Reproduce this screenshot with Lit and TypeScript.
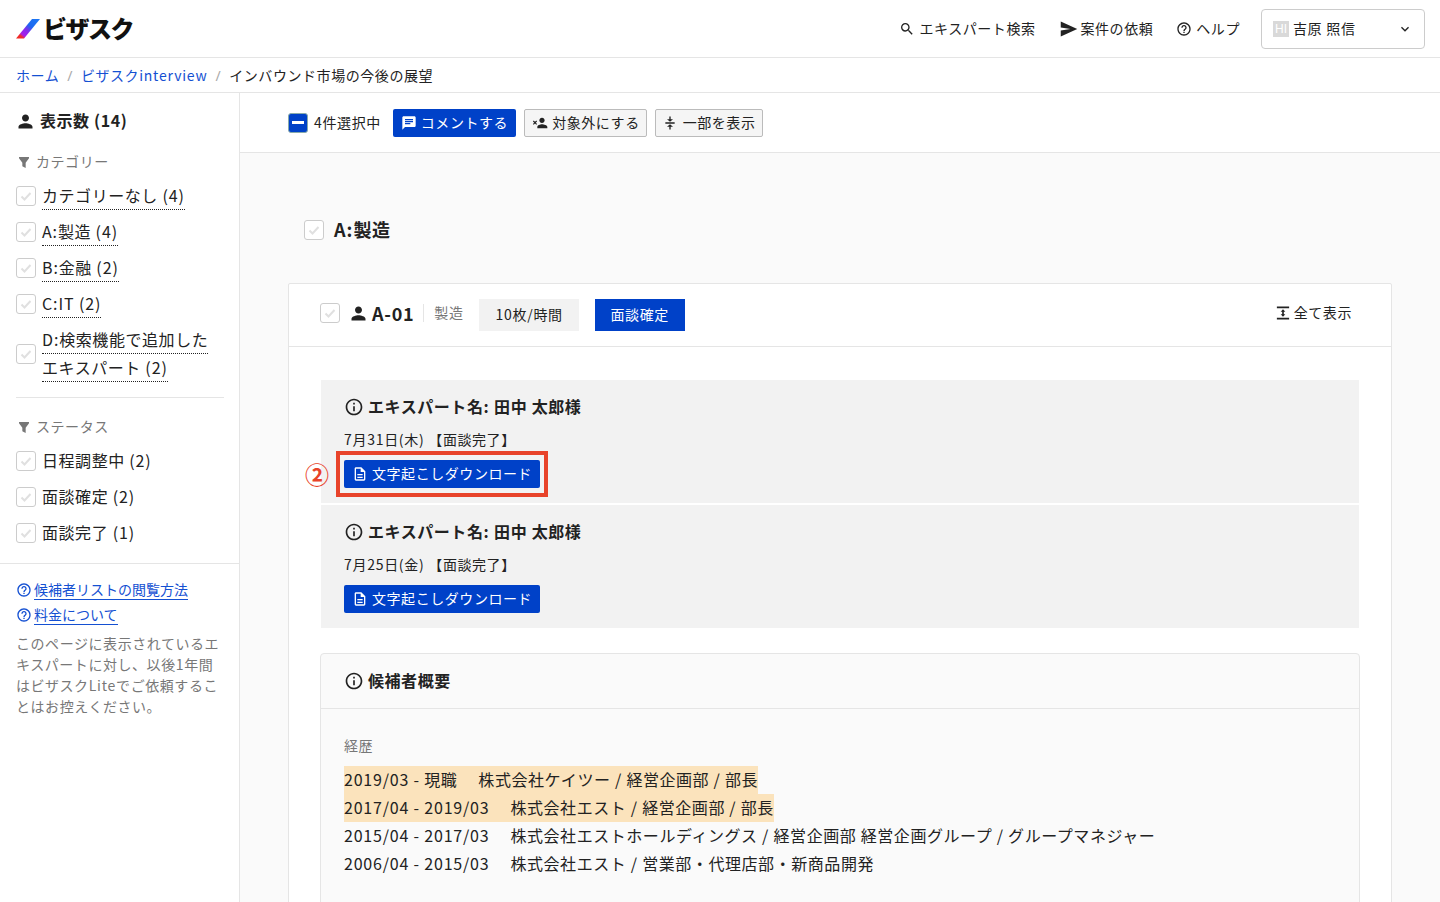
import { LitElement, html, css, svg } from "lit";
import { customElement } from "lit/decorators.js";

const ic = (d: string, size = 16, cls = "") =>
  html`<svg class="ic ${cls}" width=${size} height=${size} viewBox="0 0 24 24" fill="currentColor">${svg`<path d=${d}></path>`}</svg>`;

const t = (s: string) =>
  s.split(/([\x20-\x7e]+)/).map((part, i) => (i % 2 ? html`<span class="lat">${part}</span>` : part ? html`<span>${part}</span>` : ""));

const P = {
  person: "M12 12c2.21 0 4-1.79 4-4s-1.79-4-4-4-4 1.79-4 4 1.79 4 4 4zm0 2c-2.67 0-8 1.34-8 4v2h16v-2c0-2.66-5.33-4-8-4z",
  filter: "M4.5 4.5h15v2L14.5 13v8l-5-2.6V13L4.5 6.5z",
  search: "M15.5 14h-.79l-.28-.27A6.47 6.47 0 0 0 16 9.5 6.5 6.5 0 1 0 9.5 16c1.61 0 3.09-.59 4.23-1.57l.27.28v.79l5 4.99L20.49 19l-4.99-5zm-6 0C7.01 14 5 11.99 5 9.5S7.01 5 9.5 5 14 7.01 14 9.5 11.99 14 9.5 14z",
  send: "M1 2 23 12 1 22V14l13-2L1 10z",
  help: "M11 18h2v-2h-2v2zm1-16C6.48 2 2 6.48 2 12s4.48 10 10 10 10-4.48 10-10S17.52 2 12 2zm0 18c-4.41 0-8-3.59-8-8s3.59-8 8-8 8 3.59 8 8-3.59 8-8 8zm0-14c-2.21 0-4 1.79-4 4h2c0-1.1.9-2 2-2s2 .9 2 2c0 2-3 1.75-3 5h2c0-2.25 3-2.5 3-5 0-2.21-1.79-4-4-4z",
  info: "M11 7h2v2h-2zm0 4h2v6h-2zm1-9C6.48 2 2 6.48 2 12s4.48 10 10 10 10-4.48 10-10S17.52 2 12 2zm0 18c-4.41 0-8-3.59-8-8s3.59-8 8-8 8 3.59 8 8-3.59 8-8 8z",
  chat: "M20 2H4c-1.1 0-2 .9-2 2v18l4-4h14c1.1 0 2-.9 2-2V4c0-1.1-.9-2-2-2zM6 9h12v2H6V9zm8 5H6v-2h8v2zm4-6H6V6h12v2z",
  personX: "M15 12c2.21 0 4-1.79 4-4s-1.79-4-4-4-4 1.79-4 4 1.79 4 4 4zm0 2c-2.67 0-7 1.34-7 4v2h15v-2c0-2.66-5.33-4-8-4zM1.4 9.6 2.6 8.4 4.5 10.3l1.9-1.9 1.2 1.2-1.9 1.9 1.9 1.9-1.2 1.2-1.9-1.9-1.9 1.9-1.2-1.2 1.9-1.9z",
  compress: "M9.5 2.3h2v4.2H15L10.5 10.2 6 6.5h3.5zM3.5 10.9h14v2.2h-14zM10.5 13.8 15 17.5h-3.5v4.2h-2v-4.2H6z",
  expand: "M1.5 1h21v3h-21zM1.5 20h21v3h-21zM12 5.5l4 4.3h-2.6v4.4H16l-4 4.3-4-4.3h2.6V9.8H8z",
  doc: "M8 16h8v2H8zm0-4h8v2H8zm6-10H6c-1.1 0-2 .9-2 2v16c0 1.1.89 2 1.99 2H18c1.1 0 2-.9 2-2V8l-6-6zm4 18H6V4h7v5h5v11z",
  chev: "M7.41 8.59 12 13.17l4.59-4.58L18 10l-6 6-6-6z",
};

const cb = () => html`<span class="cb"><svg width="14" height="14" viewBox="0 0 14 14" fill="none"><path d="M2.5 7.5 5.5 10.5 11.5 4" stroke="#e0e0e0" stroke-width="2"/></svg></span>`;

@customElement("app-root")
export class AppRoot extends LitElement {
  static styles = css`
    :host { display: block; height: 902px; overflow: hidden; background: #fff; color: #222;
      font-family: "Noto Sans", "Noto Sans CJK JP", sans-serif; font-size: 14px; line-height: 20px; letter-spacing: .04em; }
    * { box-sizing: border-box; }
    .lat { font-family: "Noto Sans CJK JP", sans-serif; letter-spacing: .056em; line-height: 0; }
    .ic { flex: none; display: block; }
    header { height: 58px; border-bottom: 1px solid #e5e5e5; display: flex; align-items: center; padding: 0 15px 0 16px; }
    .logo { display: flex; align-items: center; gap: 3px; font-size: 24px; font-weight: 900; color: #111; letter-spacing: -.06em; line-height: 1; }
    .nav { margin-left: auto; display: flex; align-items: center; }
    .nav a { display: flex; align-items: center; gap: 4px; }
    .nav .sendlink { margin-left: 24px; gap: 3px; }
    .nav .helplink { margin-left: 23px; }
    .select { width: 164px; height: 40px; border: 1px solid #ccc; border-radius: 4px; display: flex; align-items: center; padding: 0 11px; margin-left: 21px; }
    .avatar { width: 16px; height: 16px; background: #d9d9d9; color: #fff; font: 12px/16px "Liberation Sans", sans-serif; text-align: center; letter-spacing: 0; margin-right: 4px; }
    .select .name { flex: 1; }
    .crumbs { height: 35px; border-bottom: 1px solid #e5e5e5; display: flex; align-items: center; padding: 2px 16px 0; }
    .crumbs a { color: #1450d2; }
    .crumbs i { font-style: normal; color: #aaa; margin: 0 8px; }
    .body { display: flex; height: 809px; }
    aside { width: 240px; flex: none; border-right: 1px solid #e5e5e5; }
    .stop { padding: 16px 15px 0 16px; height: 471px; border-bottom: 1px solid #e5e5e5; }
    .count { display: flex; align-items: center; gap: 4px; font-size: 16px; font-weight: 700; line-height: 24px; margin-left: -1px; }
    .count .lat { letter-spacing: .04em; }
    .fhead { display: flex; align-items: center; gap: 4px; color: #777; line-height: 20px; }
    .fhead.a { margin-top: 19px; margin-bottom: 10px; }
    .fhead.b { margin-top: 19px; margin-bottom: 10px; }
    .row { display: flex; align-items: center; gap: 6px; font-size: 16px; line-height: 28px; margin-bottom: 8px; }
    .row .t { flex: 1; }
    .row .u { border-bottom: 1px dotted #222; padding-bottom: 2px; }
    .cb { width: 20px; height: 20px; flex: none; border: 1px solid #ccc; border-radius: 3px; background: #fff; display: flex; align-items: center; justify-content: center; }
    .sep { border-top: 1px solid #e5e5e5; margin-top: 15px; }
    .sbot { padding: 16px 15px 0 16px; }
    .lnk { display: flex; align-items: center; gap: 2px; color: #1450d2; line-height: 20px; margin-bottom: 5px; }
    .lnk span { border-bottom: 1px solid #1450d2; line-height: 19px; letter-spacing: 0; }
    .note { color: #777; line-height: 21px; margin: 8px 0 0; }
    main { flex: 1; background: #fafafa; min-width: 0; }
    .tools { height: 60px; background: #fff; border-bottom: 1px solid #e5e5e5; display: flex; align-items: center; padding-left: 48px; }
    .cbon { width: 20px; height: 20px; background: #0041c8; border: 1px solid #8aa; border-radius: 3px; display: flex; align-items: center; justify-content: center; margin-right: 6px; }
    .cbon b { width: 12px; height: 2.5px; background: #fff; display: block; }
    .btn { height: 28px; display: flex; align-items: center; border-radius: 2px; padding: 0 8px; gap: 4px; line-height: 1; white-space: nowrap; }
    .btn.p { background: #0041c8; color: #fff; }
    .btn.s { background: #f5f5f5; border: 1px solid #bbb; padding: 0 6px 0 7px; margin-left: 8px; }
    .btn.first { margin-left: 12px; }
    .content { padding: 65px 48px 0 48px; }
    .ghead { display: flex; align-items: center; gap: 10px; padding-left: 16px; font-size: 18px; font-weight: 700; line-height: 24px; height: 24px; margin-bottom: 41px; }
    .card { width: 1104px; background: #fff; border: 1px solid #e5e5e5; border-radius: 2px; }
    .chead { height: 63px; border-bottom: 1px solid #e5e5e5; display: flex; align-items: center; padding: 0 39px 4px 31px; }
    .pic { margin-left: 8px; }
    .aid { font-size: 18px; font-weight: 700; margin-left: 3px; margin-top: 1px; line-height: 1; }
    .aid .lat { letter-spacing: .04em; }
    .vr { width: 1px; height: 18px; background: #e5e5e5; margin: 0 10px 0 9px; }
    .ind { color: #777; }
    .tag { height: 32px; padding: 0 16px; display: flex; align-items: center; margin: 4px 0 0 16px; background: #f2f2f2; }
    .tag.on { background: #0041c8; color: #fff; }
    .more { margin-left: auto; display: flex; align-items: center; gap: 4px; }
    .cbody { padding: 33px 31px 0 31px; }
    .panel { position: relative; margin: 0 1px 2px 1px; height: 123px; background: #f2f2f2; padding: 15px 23px 0; }
    .ptitle { display: flex; align-items: center; gap: 4px; font-size: 16px; font-weight: 700; line-height: 24px; }
    .date { line-height: 20px; margin-top: 11px; margin-bottom: 10px; }
    .dl { width: 196px; font-size: 14px; }
    .mark { position: absolute; left: 15px; top: 71px; width: 212px; height: 46px; border: 4px solid #e8432a; }
    .num { position: absolute; left: -16px; top: 83px; width: 24px; text-align: center; color: #e8432a; font-size: 24px; line-height: 24px; font-weight: 700; letter-spacing: 0; }
    .box { margin-top: 25px; background: #fafafa; border: 1px solid #e5e5e5; border-radius: 4px; height: 260px; }
    .bhead { height: 55px; border-bottom: 1px solid #e5e5e5; padding-left: 23px; display: flex; align-items: center; gap: 4px; font-size: 16px; font-weight: 700; }
    .bbody { padding: 27px 23px 0; }
    .lbl { color: #777; line-height: 20px; margin-bottom: 10px; }
    .car { font-size: 16px; line-height: 28px; width: fit-content; white-space: pre; }
    .car .lat { letter-spacing: .05em; }
    .car.hl { background: #fbe3bc; }
  `;

  private filterRow(...lines: string[]) {
    return html`<div class="row">${cb()}<div class="t"><span class="u">${lines.map((l) => t(l))}</span></div></div>`;
  }

  private plainRow(label: string) {
    return html`<div class="row">${cb()}<div class="t">${t(label)}</div></div>`;
  }

  private panel(date: string, marked: boolean) {
    return html`<div class="panel">
      <div class="ptitle">${ic(P.info, 20)}<span>${t("エキスパート名: 田中 太郎様")}</span></div>
      <div class="date">${t(date)}</div>
      <div class="btn p dl">${ic(P.doc, 16)}文字起こしダウンロード</div>
      ${marked ? html`<div class="mark"></div><div class="num">②</div>` : ""}
    </div>`;
  }

  render() {
    return html`
      <header>
        <div class="logo">
          <svg width="24" height="20" viewBox="0 0 24 20">
            <defs><linearGradient id="lg" x1="0" y1="1" x2="1" y2="0">
              <stop offset="0" stop-color="#f02a1e"/><stop offset=".16" stop-color="#f02a2c"/><stop offset=".24" stop-color="#a81ee8"/><stop offset=".42" stop-color="#8a28ec"/><stop offset=".62" stop-color="#1c68f0"/><stop offset="1" stop-color="#1c78f4"/>
            </linearGradient></defs>
            <path d="M16 0h8L8 19.5H0z" fill="url(#lg)"/>
          </svg>
          <span>ビザスク</span>
        </div>
        <div class="nav">
          <a>${ic(P.search, 16)}エキスパート検索</a>
          <a class="sendlink">${ic(P.send, 18)}案件の依頼</a>
          <a class="helplink">${ic(P.help, 16)}ヘルプ</a>
          <div class="select"><span class="avatar">HI</span><span class="name">吉原 照信</span>${ic(P.chev, 16)}</div>
        </div>
      </header>
      <div class="crumbs"><a>ホーム</a><i>/</i><a>${t("ビザスクinterview")}</a><i>/</i><span>インバウンド市場の今後の展望</span></div>
      <div class="body">
        <aside>
          <div class="stop">
            <div class="count">${ic(P.person, 21)}<span>${t("表示数 (14)")}</span></div>
            <div class="fhead a">${ic(P.filter, 16)}カテゴリー</div>
            ${this.filterRow("カテゴリーなし (4)")}
            ${this.filterRow("A:製造 (4)")}
            ${this.filterRow("B:金融 (2)")}
            ${this.filterRow("C:IT (2)")}
            ${this.filterRow("D:検索機能で追加した", "エキスパート (2)")}
            <div class="sep"></div>
            <div class="fhead b">${ic(P.filter, 16)}ステータス</div>
            ${this.plainRow("日程調整中 (2)")}
            ${this.plainRow("面談確定 (2)")}
            ${this.plainRow("面談完了 (1)")}
          </div>
          <div class="sbot">
            <div class="lnk">${ic(P.help, 16)}<span>候補者リストの閲覧方法</span></div>
            <div class="lnk">${ic(P.help, 16)}<span>料金について</span></div>
            <p class="note">${t("このページに表示されているエ")}${t("キスパートに対し、以後1年間")}${t("はビザスクLiteでご依頼するこ")}${t("とはお控えください。")}</p>
          </div>
        </aside>
        <main>
          <div class="tools">
            <span class="cbon"><b></b></span><span>${t("4件選択中")}</span>
            <div class="btn p first">${ic(P.chat, 16)}コメントする</div>
            <div class="btn s">${ic(P.personX, 16)}対象外にする</div>
            <div class="btn s">${ic(P.compress, 16)}一部を表示</div>
          </div>
          <div class="content">
            <div class="ghead">${cb()}<span>${t("A:製造")}</span></div>
            <div class="card">
              <div class="chead">
                ${cb()}
                <span class="pic">${ic(P.person, 21)}</span>
                <span class="aid">${t("A-01")}</span><span class="vr"></span><span class="ind">製造</span>
                <span class="tag"><span>${t("10枚/時間")}</span></span><span class="tag on">面談確定</span>
                <span class="more">${ic(P.expand, 14)}全て表示</span>
              </div>
              <div class="cbody">
                ${this.panel("7月31日(木) 【面談完了】", true)}
                ${this.panel("7月25日(金) 【面談完了】", false)}
                <div class="box">
                  <div class="bhead">${ic(P.info, 20)}候補者概要</div>
                  <div class="bbody">
                    <div class="lbl">経歴</div>
                    <div class="car hl">${t("2019/03 - 現職　 株式会社ケイツー / 経営企画部 / 部長")}</div>
                    <div class="car hl">${t("2017/04 - 2019/03　 株式会社エスト / 経営企画部 / 部長")}</div>
                    <div class="car">${t("2015/04 - 2017/03　 株式会社エストホールディングス / 経営企画部 経営企画グループ / グループマネジャー")}</div>
                    <div class="car">${t("2006/04 - 2015/03　 株式会社エスト / 営業部・代理店部・新商品開発")}</div>
                  </div>
                </div>
              </div>
            </div>
          </div>
        </main>
      </div>
    `;
  }
}
